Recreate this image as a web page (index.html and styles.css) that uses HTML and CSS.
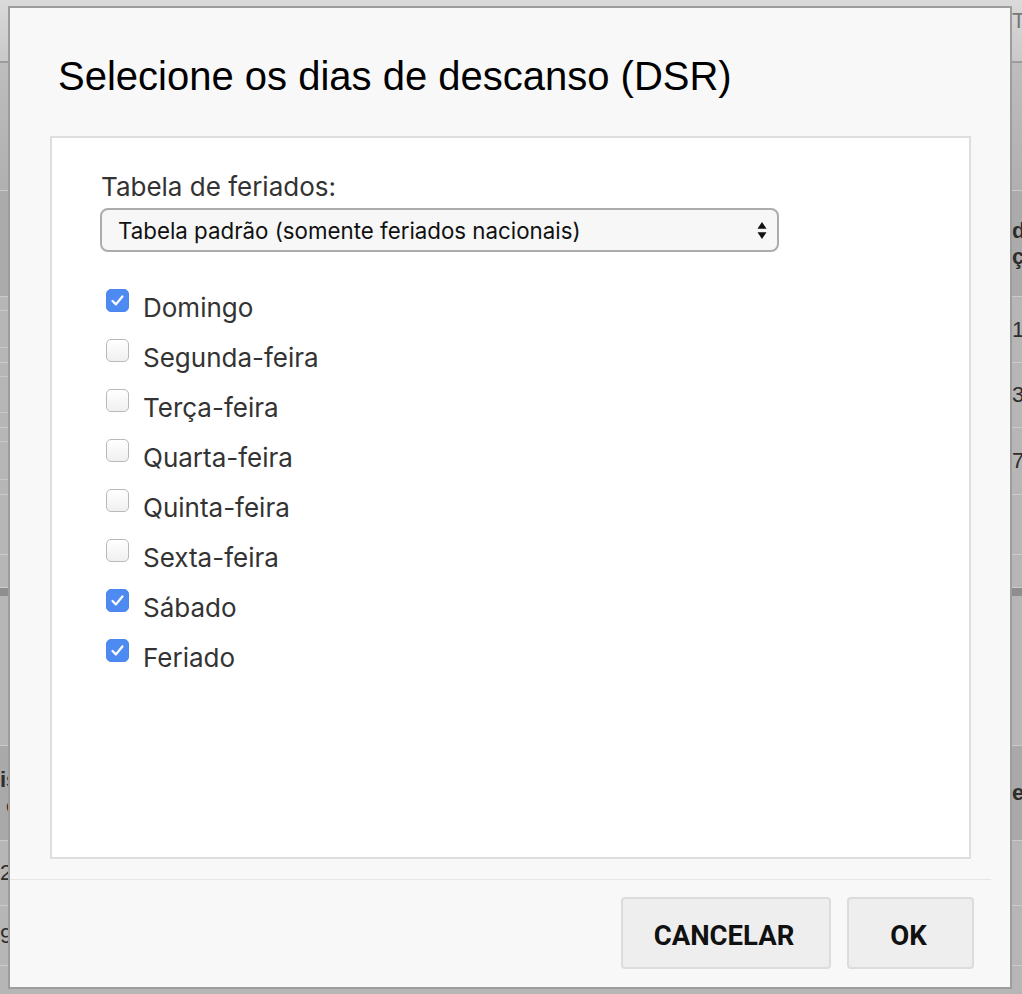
FILE: index.html
```html
<!DOCTYPE html>
<html lang="pt-BR">
<head>
<meta charset="utf-8">
<title>Selecione os dias de descanso (DSR)</title>
<link rel="stylesheet" href="styles.css">
</head>
<body>
<div class="backdrop">
  <div class="bg-row bg-top"><span class="cl"></span><span class="cr">T</span></div>
  <div class="bg-row bg-tool"><span class="cl"></span><span class="cr"></span></div>
  <div class="bg-row bg-head"><span class="cl"></span><span class="cr bold">d<br>ç</span></div>
  <div class="bg-row bg-r1 split"><span class="cl"></span><span class="cr">1</span></div>
  <div class="bg-row bg-r2 split"><span class="cl"></span><span class="cr">3</span></div>
  <div class="bg-row bg-r3 split"><span class="cl"></span><span class="cr">7</span></div>
  <div class="bg-row bg-r4"><span class="cl"></span><span class="cr"></span></div>
  <div class="bg-row bg-r5"><span class="cl"></span><span class="cr"></span></div>
  <div class="bg-row bg-dark"></div>
  <div class="bg-row bg-sec"><span class="cl"></span><span class="cr"></span></div>
  <div class="bg-row bg-head2"><span class="cl bold">is<br>ç</span><span class="cr bold">e</span></div>
  <div class="bg-row bg-r6"><span class="cl">22</span><span class="cr"></span></div>
  <div class="bg-row bg-r7"><span class="cl">9</span><span class="cr"></span></div>
  <div class="bg-row bg-r8"><span class="cl"></span><span class="cr"></span></div>
</div>

<div class="modal">
  <h1 class="modal-title">Selecione os dias de descanso (DSR)</h1>
  <div class="modal-body">
    <label class="field-label">Tabela de feriados:</label>
    <div class="select">
      <span class="select-text">Tabela padrão (somente feriados nacionais)</span>
      <svg class="select-arrows" width="10" height="19" viewBox="0 0 10 19"><path d="M5 1 L9.5 7.8 H0.5 Z M5 18 L9.5 11.2 H0.5 Z" fill="#111"/></svg>
    </div>
    <ul class="days">
      <li class="day"><span class="box checked"><svg viewBox="0 0 24 24" width="23" height="23"><path d="M6.3 12.6 L10.2 16.4 L17.6 7.4" fill="none" stroke="#fff" stroke-width="2.6" stroke-linecap="round" stroke-linejoin="round"/></svg></span>Domingo</li>
      <li class="day"><span class="box"></span>Segunda-feira</li>
      <li class="day"><span class="box"></span>Terça-feira</li>
      <li class="day"><span class="box"></span>Quarta-feira</li>
      <li class="day"><span class="box"></span>Quinta-feira</li>
      <li class="day"><span class="box"></span>Sexta-feira</li>
      <li class="day"><span class="box checked"><svg viewBox="0 0 24 24" width="23" height="23"><path d="M6.3 12.6 L10.2 16.4 L17.6 7.4" fill="none" stroke="#fff" stroke-width="2.6" stroke-linecap="round" stroke-linejoin="round"/></svg></span>Sábado</li>
      <li class="day"><span class="box checked"><svg viewBox="0 0 24 24" width="23" height="23"><path d="M6.3 12.6 L10.2 16.4 L17.6 7.4" fill="none" stroke="#fff" stroke-width="2.6" stroke-linecap="round" stroke-linejoin="round"/></svg></span>Feriado</li>
    </ul>
  </div>
  <div class="modal-footer">
    <button class="btn btn-cancel">CANCELAR</button>
    <button class="btn btn-ok">OK</button>
  </div>
</div>
</body>
</html>
```
FILE: styles.css
```css
* { box-sizing: border-box; }
html, body { margin: 0; padding: 0; }
body {
  width: 1022px;
  height: 994px;
  overflow: hidden;
  position: relative;
  background: #b5b5b5;
  font-family: "Liberation Sans", Arial, sans-serif;
}

/* dimmed page behind the dialog */
.backdrop {
  display: flex;
  flex-direction: column;
  height: 994px;
}
.bg-row {
  display: flex;
  justify-content: space-between;
  align-items: center;
  border-bottom: 1px solid #cacaca;
  color: #2e2e2e;
  font-size: 22px;
  flex: none;
}
.cl { width: 9px; overflow: hidden; display: flex; justify-content: flex-end; white-space: nowrap; line-height: 26px; direction: rtl; }
.cr { width: 11px; overflow: hidden; padding-left: 1px; white-space: nowrap; line-height: 26px; }
.bold { font-weight: bold; }
.bg-top { height: 63px; background: linear-gradient(#dadada, #c9c9c9); border-bottom: 2px solid #9c9c9c; align-items: flex-start; padding-top: 8px; color: #777; }
.bg-tool { height: 128px; background: linear-gradient(#bdbdbd, #b0b0b0); }
.bg-head { height: 106px; background: #ababab; }
.bg-r1 { height: 66px; background-color: #b6b6b6; }
.bg-r2 { height: 65px; background-color: #b6b6b6; }
.bg-r3 { height: 67px; background-color: #b6b6b6; }
.split {
  background-image: linear-gradient(to bottom,
    transparent 13px, #c8c8c8 13px, #c8c8c8 14px, transparent 14px,
    transparent calc(100% - 15px), #c8c8c8 calc(100% - 15px), #c8c8c8 calc(100% - 14px), transparent calc(100% - 14px));
  background-size: 9px 100%;
  background-repeat: no-repeat;
}
.bg-r4 { height: 60px; background: #b6b6b6; }
.bg-r5 { height: 33px; background: #b6b6b6; }
.bg-dark { height: 8px; background: #8e8e8e; border-bottom: none; }
.bg-sec { height: 150px; background: #b6b6b6; }
.bg-head2 { height: 95px; background: #a9a9a9; }
.bg-r6 { height: 65px; background: #b6b6b6; }
.bg-r7 { height: 60px; background: #b6b6b6; }
.bg-r8 { height: 30px; background: #b6b6b6; }

/* dialog */
.modal {
  position: absolute;
  left: 8px;
  top: 6px;
  width: 1004px;
  height: 983px;
  background: #f8f8f8;
  border: 2px solid #9d9d9d;
  display: flex;
  flex-direction: column;
}
.modal-title {
  margin: 0;
  padding: 44px 0 0 48px;
  height: 128px;
  font-family: "Liberation Sans", Arial, sans-serif;
  font-weight: normal;
  font-size: 40px;
  line-height: 48px;
  color: #000;
}
.modal-body {
  margin: 0 39px 0 40px;
  height: 723px;
  background: #fff;
  border: 2px solid #dedede;
  padding: 33px 0 0 48px;
  font-family: Inter, "Noto Sans", sans-serif;
}
.field-label {
  display: block;
  font-size: 26px;
  line-height: 32px;
  color: #333;
  padding-left: 1px;
}
.select {
  margin-top: 5px;
  width: 679px;
  height: 44px;
  border: 2px solid #acacac;
  border-radius: 8px;
  background: #f7f7f7;
  display: flex;
  align-items: center;
  justify-content: space-between;
  padding: 0 10px 0 16px;
}
.select-text { font-size: 22.3px; color: #111; }
.select-arrows { display: block; }
.days {
  list-style: none;
  margin: 30px 0 0 0;
  padding: 0;
}
.day {
  display: flex;
  align-items: center;
  height: 50px;
  font-size: 26px;
  color: #333;
  padding-left: 6px;
}
.box {
  width: 23px;
  height: 23px;
  border-radius: 5px;
  border: 1px solid #b9b9b9;
  background: linear-gradient(#ffffff, #f0f0f0);
  margin-right: 14px;
  margin-top: -14px;
  display: flex;
  align-items: center;
  justify-content: center;
  flex: none;
}
.box.checked {
  background: #4d8bf3;
  border-color: #4a86ee;
}
.box svg { display: block; }

.modal-footer {
  margin: 20px 19px 0 0;
  border-top: 1px solid #e6e6e6;
  padding: 17px 17px 0 0;
  display: flex;
  justify-content: flex-end;
  gap: 16px;
}
.btn {
  height: 72px;
  background: #eeeeee;
  border: 2px solid #dcdcdc;
  border-radius: 4px;
  font-family: Roboto, "Liberation Sans", sans-serif;
  font-weight: bold;
  font-size: 27.5px;
  color: #111;
  padding: 5px 4px 0 0;
  cursor: pointer;
}
.btn-cancel { width: 210px; }
.btn-ok { width: 127px; }
```
